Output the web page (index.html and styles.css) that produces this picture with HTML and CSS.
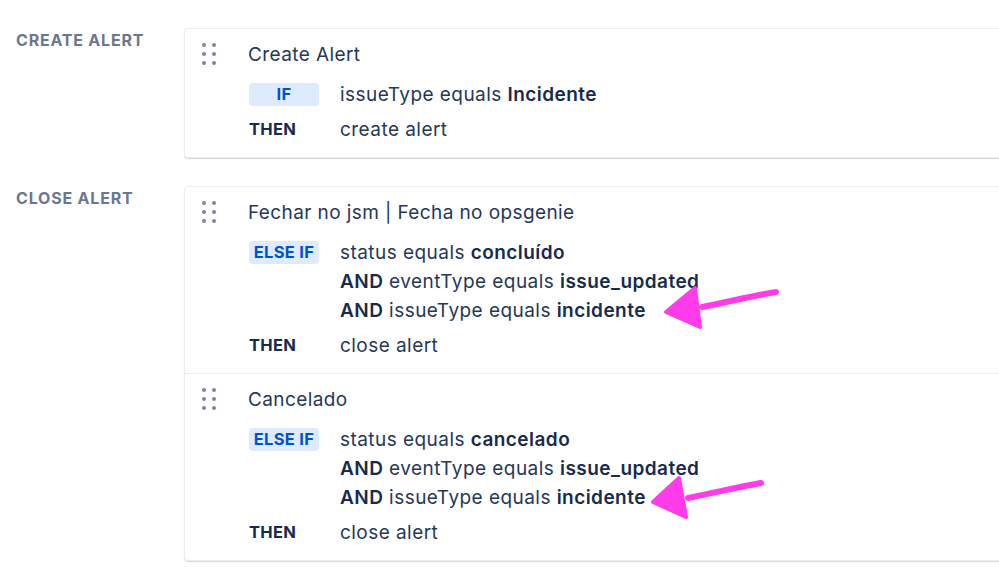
FILE: index.html
```html
<html>
	<head>
		<title>Alert rules</title>
		<meta name="viewport" content="width=device-width,initial-scale=1">
		<link rel="stylesheet" href="styles.css">
	</head>
	<body>
		<div class="page">
			<section class="group">
				<h2 class="group-label">Create alert</h2>
				<div class="cards">
					<div class="card">
						<div class="handle"><i></i><i></i><i></i><i></i><i></i><i></i></div>
						<div class="card-body">
							<div class="card-title">Create Alert</div>
							<div class="rule">
								<span class="badge">IF</span>
								<div class="conds">
									<div>issueType equals <b>Incidente</b></div>
								</div>
							</div>
							<div class="rule then">
								<span class="kw">THEN</span>
								<div class="conds"><div>create alert</div></div>
							</div>
						</div>
					</div>
				</div>
			</section>

			<section class="group">
				<h2 class="group-label">Close alert</h2>
				<div class="cards">
					<div class="card">
						<div class="handle"><i></i><i></i><i></i><i></i><i></i><i></i></div>
						<div class="card-body">
							<div class="card-title">Fechar no jsm | Fecha no opsgenie</div>
							<div class="rule">
								<span class="badge">ELSE IF</span>
								<div class="conds">
									<div>status equals <b>concluído</b></div>
									<div><b>AND</b> eventType equals <b>issue_updated</b></div>
									<div><b>AND</b> issueType equals <b>incidente</b></div>
								</div>
							</div>
							<div class="rule then">
								<span class="kw">THEN</span>
								<div class="conds"><div>close alert</div></div>
							</div>
						</div>
					</div>
					<div class="card">
						<div class="handle"><i></i><i></i><i></i><i></i><i></i><i></i></div>
						<div class="card-body">
							<div class="card-title">Cancelado</div>
							<div class="rule">
								<span class="badge">ELSE IF</span>
								<div class="conds">
									<div>status equals <b>cancelado</b></div>
									<div><b>AND</b> eventType equals <b>issue_updated</b></div>
									<div><b>AND</b> issueType equals <b>incidente</b></div>
								</div>
							</div>
							<div class="rule then">
								<span class="kw">THEN</span>
								<div class="conds"><div>close alert</div></div>
							</div>
						</div>
					</div>
				</div>
			</section>
		</div>

		<!-- hand drawn annotation arrows -->
		<svg class="arrow arrow-1" width="130" height="60" viewBox="0 0 130 60">
			<path d="M114 8 C 95 11, 70 17, 40 23" fill="none" stroke="#ff3bea" stroke-width="6" stroke-linecap="round"/>
			<path d="M4 28 L33 4 L38 43 Z" fill="#ff3bea" stroke="#ff3bea" stroke-width="4" stroke-linejoin="round"/>
		</svg>
		<svg class="arrow arrow-2" width="130" height="60" viewBox="0 0 130 60">
			<path d="M113 8 C 95 11, 70 17, 40 23" fill="none" stroke="#ff3bea" stroke-width="6" stroke-linecap="round"/>
			<path d="M5 27 L31 3 L38 42 Z" fill="#ff3bea" stroke="#ff3bea" stroke-width="4" stroke-linejoin="round"/>
		</svg>
	</body>
</html>
```

FILE: styles.css
```css
* {
	margin: 0;
	padding: 0;
	box-sizing: border-box;
}

body {
	overflow: hidden;
	background: #fff;
	position: relative;
	width: 999px;
	height: 570px;
	font-family: Inter, 'Noto Sans', sans-serif;
	color: #172b4d;
}

.page {
	padding: 28px 0 0 16px;
	display: flex;
	flex-direction: column;
	gap: 28px;
}

.group {
	display: flex;
}

.group-label {
	width: 168px;
	flex-shrink: 0;
	font-size: 16px;
	font-weight: 700;
	letter-spacing: 0.8px;
	text-transform: uppercase;
	color: #6b778c;
	line-height: 24px;
}

.cards {
	width: 840px;
	flex-shrink: 0;
	border: 1px solid #ebecf0;
	border-radius: 4px;
	box-shadow: 0 1px 1px rgba(9, 30, 66, 0.18);
}

.card {
	display: flex;
	padding: 14px 16px 13px 17px;
}

.card + .card {
	border-top: 1px solid #ebecf0;
}

.handle {
	width: 14px;
	margin-top: 0;
	height: 22px;
	display: grid;
	grid-template-columns: 4px 4px;
	grid-auto-rows: 4px;
	column-gap: 6px;
	row-gap: 5px;
}

.handle i {
	display: block;
	width: 4px;
	height: 4px;
	border-radius: 50%;
	background: #7a869a;
}

.card-body {
	margin-left: 32px;
	flex: 1;
}

.card-title {
	font-size: 19px;
	letter-spacing: 0.4px;
	line-height: 24px;
	color: #253858;
	margin-bottom: 13px;
}

.rule {
	display: flex;
	font-size: 19px;
	letter-spacing: 0.45px;
	line-height: 29px;
	color: #253858;
}

.rule b {
	font-weight: 600;
	color: #172b4d;
}

.rule.then {
	margin-top: 6px;
}

.badge, .kw {
	flex-shrink: 0;
	font-size: 16.5px;
	font-weight: 700;
	letter-spacing: 0.3px;
}

.badge {
	width: 70px;
	height: 23px;
	line-height: 23px;
	margin: 3px 21px 0 1px;
	text-align: center;
	background: #deebff;
	color: #0052cc;
	border-radius: 4px;
}

.kw {
	width: 92px;
	padding-left: 1px;
	color: #172b4d;
}

.arrow {
	position: absolute;
	overflow: visible;
}

.arrow-1 {
	left: 662px;
	top: 284px;
}

.arrow-2 {
	left: 648px;
	top: 475px;
}
```
